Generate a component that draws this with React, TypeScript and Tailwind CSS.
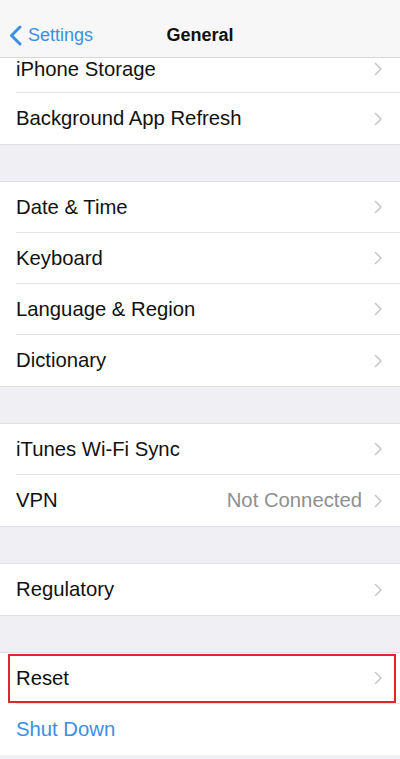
import { ReactNode } from 'react';

const font = { fontFamily: '"Liberation Sans", Arial, sans-serif' };

function Chevron() {
  return (
    <svg width="9" height="14" viewBox="0 0 9 14" className="shrink-0">
      <path d="M1.5 1.5 L7 7 L1.5 12.5" fill="none" stroke="#c7c7cc" strokeWidth="1.6" strokeLinecap="round" strokeLinejoin="round" />
    </svg>
  );
}

function Row({ label, value, last, blue, highlight }: { label: string; value?: string; last?: boolean; blue?: boolean; highlight?: boolean }) {
  return (
    <div className="relative h-[51px] shrink-0 flex items-center pl-4">
      {highlight && <div className="absolute left-2 right-1 top-[1px] bottom-[1px] border-2 border-[#e3262d]" />}
      <div className={`flex-1 h-full flex items-center pr-[17px] ${last ? '' : 'border-b border-[#e3e3e6]'}`}>
        <span className={`flex-1 text-[20.3px] ${blue ? 'text-[#3d8fe3]' : 'text-[#111]'}`}>{label}</span>
        {value && <span className="text-[20.3px] text-[#8e8e93] mr-[12px]">{value}</span>}
        {!blue && <Chevron />}
      </div>
    </div>
  );
}

function Gap() {
  return <div className="h-[38px] border-y border-[#e0e0e4]" />;
}

function Group({ children }: { children: ReactNode }) {
  return <div className="bg-white">{children}</div>;
}

export default function App() {
  return (
    <div className="w-[400px] h-[759px] bg-[#efeff4] overflow-hidden" style={font}>
      {/* Nav bar */}
      <div className="relative z-10 h-[58px] bg-[#f7f7f7] border-b border-[#d8d8dc] flex items-end pb-[8px]">
        <div className="flex items-center pl-[9px] gap-[6px] text-[#3d8fe3]">
          <svg width="13" height="21" viewBox="0 0 13 21">
            <path d="M11 2 L2.5 10.5 L11 19" fill="none" stroke="#3d8fe3" strokeWidth="3" strokeLinecap="round" strokeLinejoin="round" />
          </svg>
          <span className="text-[18px]">Settings</span>
        </div>
        <div className="absolute inset-x-0 bottom-[8px] text-center text-[18px] font-bold text-[#111]">General</div>
      </div>

      {/* First group, scrolled partly under the nav bar */}
      <Group>
        <div className="h-[35px] flex items-start pl-4">
          <div className="flex-1 h-full flex items-start pt-[1px] pr-[17px] border-b border-[#e3e3e6]">
            <span className="flex-1 text-[20.3px] leading-[20px] text-[#111]">iPhone Storage</span>
            <span className="pt-[3px]"><Chevron /></span>
          </div>
        </div>
        <Row label="Background App Refresh" last />
      </Group>

      <Gap />
      <Group>
        <Row label="Date & Time" />
        <Row label="Keyboard" />
        <Row label="Language & Region" />
        <Row label="Dictionary" last />
      </Group>

      <Gap />
      <Group>
        <Row label="iTunes Wi-Fi Sync" />
        <Row label="VPN" value="Not Connected" last />
      </Group>

      <Gap />
      <Group>
        <Row label="Regulatory" last />
      </Group>

      <Gap />
      <Group>
        <Row label="Reset" highlight />
        <Row label="Shut Down" blue last />
      </Group>
    </div>
  );
}
